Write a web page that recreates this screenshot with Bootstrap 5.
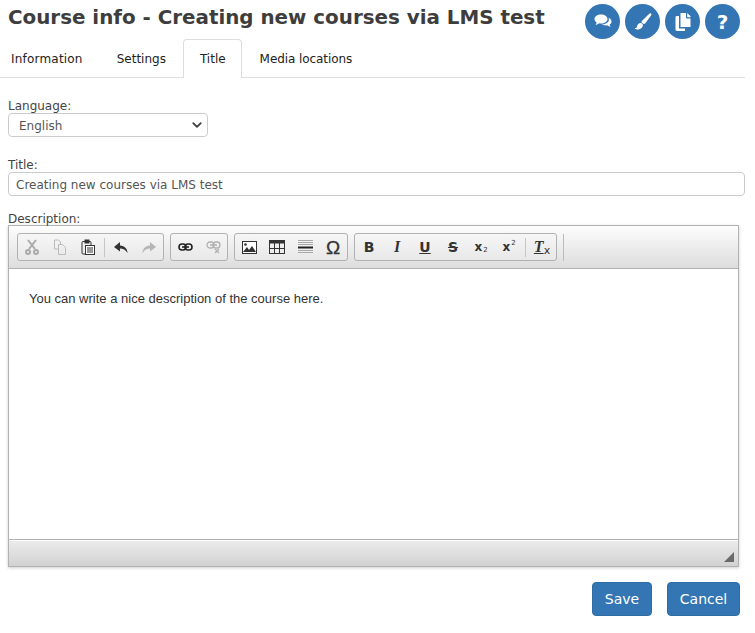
<!DOCTYPE html>
<html lang="en"><head><meta charset="utf-8"><title>Course info</title>
<link href="https://cdn.jsdelivr.net/npm/bootstrap@5.3.0/dist/css/bootstrap.min.css" rel="stylesheet">
<style>
html,body{height:633px;overflow:hidden;background:#fff}
body{font-family:"DejaVu Sans",sans-serif;color:#333;font-size:12px}
.page-head{height:39px;padding:0 15px 0 8px}
.page-title{font-size:19.87px;font-weight:700;color:#3d3d3d;margin:0;line-height:35px;white-space:nowrap}
.round-btn{width:35px;height:35px;border-radius:50%;background:#3476b4;border:0;padding:0;display:flex;align-items:center;justify-content:center}
.btn-cluster{gap:5px;padding-top:4px}
.tab-strip{height:39px;border-bottom:1px solid #ddd;margin:0 10px 0 0}
.tab-strip .nav-link{color:#222;font-size:12px;padding:0 10px;height:39px;line-height:39px;border:1px solid transparent;border-bottom:0;border-radius:4px 4px 0 0}
.tab-strip .nav-link.active{border-color:#ddd;background:#fff;padding:0 15px 0 16px;color:#222}
.tab-strip .tab-first{margin-right:12px;letter-spacing:.2px}
.tab-strip .tab-second{margin-right:6px}
.tab-strip .tab-third{margin-right:7px}
.tab-strip .tab-fourth{letter-spacing:-.08px}
.form-zone{padding:0 10px 0 8px}
.fld-label{font-size:12px;line-height:14px;margin:0;color:#444;display:block}
.lang-select{width:200px;height:24px;font-size:12px;padding:1px 0 0 10px;color:#555;border:1px solid #ccc;border-radius:4px;background-position:right 4px center;background-size:12px 10px;line-height:22px;background-image:url("data:image/svg+xml,%3csvg xmlns='http://www.w3.org/2000/svg' viewBox='0 0 16 16'%3e%3cpath fill='none' stroke='%23444' stroke-linecap='round' stroke-linejoin='round' stroke-width='3' d='m2 5 6 6 6-6'/%3e%3c/svg%3e")}
.title-input{height:24px;font-size:12px;padding:1px 7px 0;color:#555;border:1px solid #ccc;border-radius:4px;line-height:22px}
.editor-box{border:1px solid #b2b2b2;box-shadow:0 1px 3px rgba(0,0,0,.2);height:342px;width:731px;display:flex;flex-direction:column;margin-top:-1px}
.tool-row{height:43px;flex:none;background:linear-gradient(#fdfdfd,#ddd);border-bottom:1px solid #b2b2b2;padding:7px 0 0 8px;display:flex;align-items:flex-start;gap:6px}
.tool-grp{height:28px;border:1px solid #b1b1b1;border-radius:3px;display:flex;align-items:center;background:linear-gradient(#f6f6f6,#e8e8e8)}
.tool-ico{width:28px;height:26px;display:flex;align-items:center;justify-content:center;color:#333;font-family:"Liberation Sans",sans-serif;font-size:16px;font-weight:700;line-height:1}
.tool-ico svg{display:block}
.tool-ico.ic-omega{font-size:19px;font-weight:400;-webkit-text-stroke:.3px #333}
.tool-ico.ic-dv{font-family:"DejaVu Sans",sans-serif;font-size:14px}
.tool-ico.ic-ser{font-family:"Liberation Serif",serif;font-style:italic;font-size:16px}
.tool-ico.ic-x{font-family:"DejaVu Sans",sans-serif;font-size:12px}
.ic-u{text-decoration:underline}
.ic-s{text-decoration:line-through}
.tool-ico .tiny-sub,.tool-ico .tiny-sup{font-size:7px;font-weight:400;line-height:1;font-style:normal;font-family:"DejaVu Sans",sans-serif}
.tiny-sub{align-self:flex-end;margin:0 0 6px 1px}
.tiny-sup{align-self:flex-start;margin:6px 0 0 1px}
.tool-ico .tiny-x{font-size:11px;font-weight:400;font-style:normal;font-family:"DejaVu Sans",sans-serif;align-self:flex-end;margin:0 0 4px 0}
.tool-sep{width:1px;height:19px;background:#c6c6c6;flex:none;margin:0 2px}
.tool-end{width:1px;height:27px;background:#bbb;flex:none;margin-top:1px}
.edit-body{flex:1;background:#fff;font-family:"Liberation Sans",sans-serif;font-size:13px;color:#333;padding:22px 20px 0}
.edit-body p{margin:0;line-height:16px}
.status-row{height:27px;flex:none;background:linear-gradient(#ececec,#d2d2d2);border-top:1px solid #b2b2b2;box-shadow:inset 0 1px 0 #fff;position:relative}
.grip{position:absolute;right:4px;bottom:4px;width:0;height:0;border-style:solid;border-width:0 0 10px 10px;border-color:transparent transparent #6a6a6a transparent}
.act-btn{background:#3476b4;border:1px solid #2e6da4;color:#fff;font-size:14px;height:34px;border-radius:4px;padding:0;line-height:32px}
.act-btn:hover{background:#2e6da4;color:#fff}
.gap-a{margin-top:21px}.gap-c{margin-top:21px}.gap-d{margin-top:16px}
.foot-row{padding:15px 5px 0 0;gap:15px}
.w-save{width:60px}.w-cancel{width:73px}
.help-mark{color:#fff;font:700 20px/1 "DejaVu Sans",sans-serif}
</style></head>
<body>
<div class="page-head d-flex justify-content-between align-items-start">
 <h1 class="page-title">Course info - Creating new courses via LMS test</h1>
 <div class="d-flex btn-cluster">
  <button class="round-btn" aria-label="Comments"><svg width="18" height="15" viewBox="0 0 18 15"><path fill="#fff" d="M7 .5c3.600 0 6.500 2 6.500 4.500S10.600 9.500 7 9.500c-.7 0-1.300-.1-2-.2C4 10.300 2.800 10.700 1.500 11c.6-.8 1-1.700 1-2.700C1.300 7.500.500 6.300.500 5 .5 2.500 3.400.5 7 .5z"/><path fill="#fff" d="M14.600 3.800C16.500 4.600 17.500 6 17.500 7.400c0 1.200-.7 2.300-1.800 3 .1 1 .4 1.800 1 2.600-1.300-.3-2.400-.8-3.300-1.700-.5.1-1.100.2-1.600.2-1.600 0-3-.5-4-1.200 4 .3 8.300-2 6.800-6.500z"/></svg></button>
  <button class="round-btn" aria-label="Style"><svg width="18" height="18" viewBox="0 0 18 18"><path fill="#fff" d="M17 .5c.6.500.5 1.300 0 2.100L11.500 10c-.6.800-1.200 1.200-1.800 1L7.500 9.300c-.2-.7.200-1.300.9-1.900L15 1.100c.7-.6 1.500-1 2-.6zM6.700 10c1.300 0 2.400 1.100 2.200 2.500-.3 2.200-2.400 3.700-4.400 3.900-1.300.1-2.900-.3-3.800-1 .9 0 1.700-.4 2-1.200.5-2.400 1.900-4.200 4-4.200z"/></svg></button>
  <button class="round-btn" aria-label="Copy"><svg width="16" height="18" viewBox="0 0 16 18"><path fill="#fff" d="M5.500 0H11v4.500c0 .6.400 1 1 1h3.500V14H5.500z"/><path fill="#fff" d="M12.200 0l3.300 3.300v1H12.200z"/><path fill="#fff" d="M4 3v12.500h2V15.500h4V18H2c-.8 0-1.500-.6-1.500-1.400V4.400C.5 3.600 1.200 3 2 3z"/></svg></button>
  <button class="round-btn" aria-label="Help"><span class="help-mark">?</span></button>
 </div>
</div>
<ul class="nav tab-strip">
 <li class="nav-item"><a class="nav-link tab-first" href="#">Information</a></li>
 <li class="nav-item"><a class="nav-link tab-second" href="#">Settings</a></li>
 <li class="nav-item"><a class="nav-link active tab-third" href="#">Title</a></li>
 <li class="nav-item"><a class="nav-link tab-fourth" href="#">Media locations</a></li>
</ul>
<div class="form-zone">
 <label class="fld-label gap-a" for="lg">Language:</label>
 <select id="lg" class="form-select lang-select"><option>English</option></select>
 <label class="fld-label gap-c" for="tt">Title:</label>
 <input id="tt" class="form-control title-input" value="Creating new courses via LMS test">
 <label class="fld-label gap-d">Description:</label>
 <div class="editor-box">
  <div class="tool-row">
   <div class="tool-grp">
    <span class="tool-ico"><svg width="16" height="16" viewBox="0 0 16 16" fill="none" stroke="#aaa" stroke-width="2"><path d="M4 1l7 9M12 1L5 10"/><circle cx="4" cy="13" r="2"/><circle cx="12" cy="13" r="2"/></svg></span>
    <span class="tool-ico"><svg width="14" height="16" viewBox="0 0 14 16" fill="none" stroke="#bbb"><path d="M1.500 1h4l2 2v3M1.500 1v9h3.500"/><path d="M5.500 5.500h4l3 3v7h-7z"/></svg></span>
    <span class="tool-ico"><svg width="14" height="16" viewBox="0 0 14 16" fill="none" stroke="#333"><rect x="1" y="2.500" width="9" height="12.500" rx="1"/><rect x="4" y="1" width="4" height="3" fill="#333"/><rect x="4.500" y="6.500" width="9" height="9" fill="#fff"/><path d="M6 9h6M6 11h6M6 13h6"/></svg></span>
    <span class="tool-sep"></span>
    <span class="tool-ico"><svg width="16" height="13" viewBox="0 0 16 13"><path fill="#333" d="M7 1L1 6l6 4.500V7.500c3 0 5.500 1.200 7.500 4.500 0-4-2.500-7-7.500-7.500z"/></svg></span>
    <span class="tool-ico"><svg width="16" height="13" viewBox="0 0 16 13"><path fill="#b5b5b5" d="M9 1l6 5-6 4.500V7.500c-3 0-5.500 1.200-7.500 4.500 0-4 2.500-7 7.500-7.500z"/></svg></span>
   </div>
   <div class="tool-grp">
    <span class="tool-ico"><svg width="15" height="8" viewBox="0 0 15 8" fill="none" stroke="#222" stroke-width="1.600"><rect x="1" y="1" width="7" height="6" rx="3"/><rect x="7" y="1" width="7" height="6" rx="3"/><path d="M4 4h7"/></svg></span>
    <span class="tool-ico"><svg width="15" height="13" viewBox="0 0 15 13" fill="none" stroke="#b0b0b0" stroke-width="1.300"><rect x="1" y="1" width="7" height="6" rx="3"/><rect x="7" y="1" width="7" height="6" rx="3"/><path d="M4 4h7M9 8l4 4M13 8l-4 4"/></svg></span>
   </div>
   <div class="tool-grp">
    <span class="tool-ico"><svg width="15" height="13" viewBox="0 0 15 13"><rect x=".5" y=".5" width="14" height="12" fill="#fff" stroke="#333"/><circle cx="3.500" cy="3.500" r="1.300" fill="#333"/><path fill="#333" d="M1 11l4-5 2 3 3-4 4 6z"/></svg></span>
    <span class="tool-ico"><svg width="16" height="14" viewBox="0 0 16 14" fill="none" stroke="#333"><rect x=".5" y=".5" width="15" height="13"/><rect x="0" y="0" width="16" height="3.500" fill="#333" stroke="none"/><path d="M.5 8.500h15M5.500 3v10.500M10.500 3v10.500"/></svg></span>
    <span class="tool-ico"><svg width="15" height="16" viewBox="0 0 15 16"><path stroke="#aaa" d="M0 1.500h15M0 3.500h15M0 5.500h15M0 11.500h15M0 13.500h15"/><path stroke="#222" stroke-width="2" d="M0 8.500h15"/></svg></span>
    <span class="tool-ico ic-omega">Ω</span>
   </div>
   <div class="tool-grp">
    <span class="tool-ico ic-dv">B</span>
    <span class="tool-ico ic-ser">I</span>
    <span class="tool-ico ic-dv"><span class="ic-u">U</span></span>
    <span class="tool-ico ic-dv"><span class="ic-s">S</span></span>
    <span class="tool-ico ic-x">x<span class="tiny-sub">2</span></span>
    <span class="tool-ico ic-x">x<span class="tiny-sup">2</span></span>
    <span class="tool-sep"></span>
    <span class="tool-ico ic-ser"><span class="ic-u">T</span><span class="tiny-x">x</span></span>
   </div>
   <span class="tool-end"></span>
  </div>
  <div class="edit-body"><p>You can write a nice description of the course here.</p></div>
  <div class="status-row"><span class="grip"></span></div>
 </div>
 <div class="d-flex justify-content-end foot-row">
  <button class="btn act-btn w-save">Save</button>
  <button class="btn act-btn w-cancel">Cancel</button>
 </div>
</div>
<script src="https://cdn.jsdelivr.net/npm/bootstrap@5.3.0/dist/js/bootstrap.bundle.min.js"></script>
</body></html>
